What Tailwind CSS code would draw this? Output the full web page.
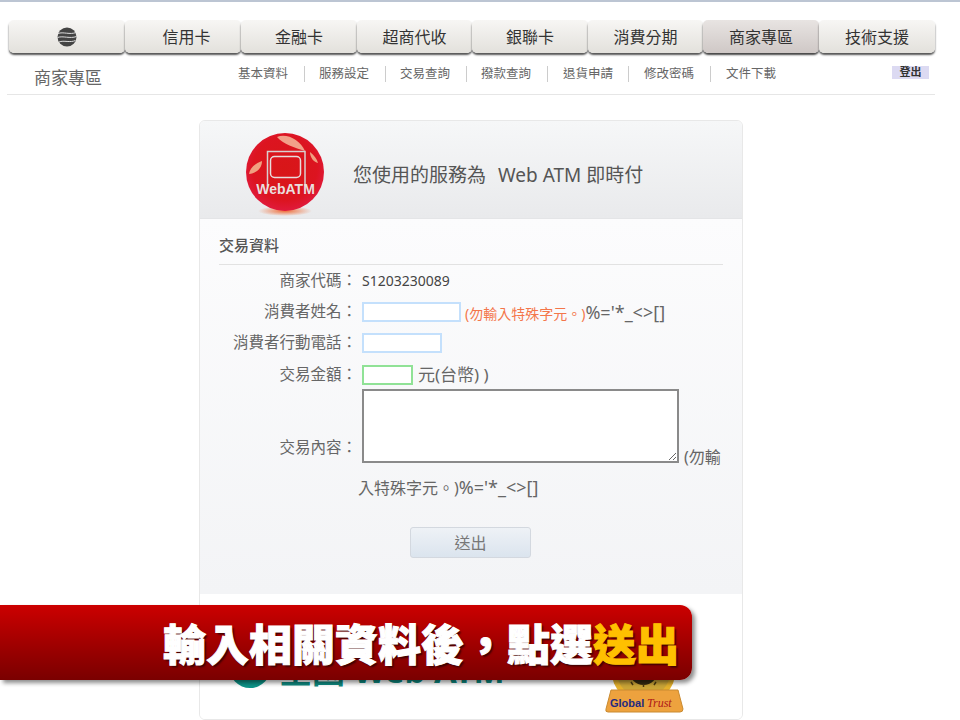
<!DOCTYPE html>
<html lang="zh-Hant">
<head>
    <meta charset="UTF-8">
    <title>商家專區</title>
    <script src="https://cdn.jsdelivr.net/npm/@tailwindcss/browser@4"></script>
</head>
<body class="relative h-[720px] w-[960px] overflow-hidden bg-white font-['Noto_Sans','Noto_Sans_CJK_TC',sans-serif] text-[#555]">
    <div class="h-[2px] bg-[#bcc5d3]"></div>

    <!-- main tabs -->
    <div class="mt-[18px] ml-[9px] flex h-[33px] w-[926px]">
        <div class="flex h-full w-[116px] items-center justify-center rounded-[5px] bg-gradient-to-b from-[#f7f6f4] to-[#e3e1dc] shadow-[0_2px_2px_#555]">
            <svg width="20" height="20" viewBox="0 0 20 20">
                <circle cx="10" cy="10" r="9.500" fill="#444"/>
                <path d="M1 6.500C6 4.500 13 8 19 5.500M0.500 10.500C6 8.500 13 12 19.500 9.500M2 15C7 13 13 16 18.500 13.500" stroke="#ddd" stroke-width="1" fill="none"/>
            </svg>
        </div>
        <div class="flex h-full w-[116px] items-center justify-center rounded-[5px] bg-gradient-to-b from-[#f7f6f4] to-[#e3e1dc] pl-[7px] text-[16px] text-[#333] shadow-[0_2px_2px_#555]">信用卡</div>
        <div class="flex h-full w-[116px] items-center justify-center rounded-[5px] bg-gradient-to-b from-[#f7f6f4] to-[#e3e1dc] text-[16px] text-[#333] shadow-[0_2px_2px_#555]">金融卡</div>
        <div class="flex h-full w-[115px] items-center justify-center rounded-[5px] bg-gradient-to-b from-[#f7f6f4] to-[#e3e1dc] text-[16px] text-[#333] shadow-[0_2px_2px_#555]">超商代收</div>
        <div class="flex h-full w-[116px] items-center justify-center rounded-[5px] bg-gradient-to-b from-[#f7f6f4] to-[#e3e1dc] text-[16px] text-[#333] shadow-[0_2px_2px_#555]">銀聯卡</div>
        <div class="flex h-full w-[115px] items-center justify-center rounded-[5px] bg-gradient-to-b from-[#f7f6f4] to-[#e3e1dc] text-[16px] text-[#333] shadow-[0_2px_2px_#555]">消費分期</div>
        <div class="flex h-full w-[116px] items-center justify-center rounded-[5px] bg-gradient-to-b from-[#e8e4e2] to-[#cfc8c6] text-[16px] text-[#333] shadow-[0_2px_2px_#444]">商家專區</div>
        <div class="flex h-full w-[116px] items-center justify-center rounded-[5px] bg-gradient-to-b from-[#f7f6f4] to-[#e3e1dc] text-[16px] text-[#333] shadow-[0_2px_2px_#555]">技術支援</div>
    </div>

    <!-- sub nav -->
    <div class="relative ml-[7px] flex h-[42px] w-[928px] border-b border-[#e6e6e6] pt-[13px]">
        <div class="ml-[27px] w-[204px] text-[17px] leading-[24px] text-[#666]">商家專區</div>
        <div class="flex h-[16px] text-[12.500px] leading-[16px] text-[#666]">
            <span class="w-[67px] border-r border-[#ccc]">基本資料</span>
            <span class="w-[81px] border-r border-[#ccc] pl-[14px]">服務設定</span>
            <span class="w-[81px] border-r border-[#ccc] pl-[14px]">交易查詢</span>
            <span class="w-[81px] border-r border-[#ccc] pl-[14px]">撥款查詢</span>
            <span class="w-[81px] border-r border-[#ccc] pl-[15px]">退貨申請</span>
            <span class="w-[82px] border-r border-[#ccc] pl-[15px]">修改密碼</span>
            <span class="pl-[15px]">文件下載</span>
        </div>
        <div class="absolute top-[13px] right-[6px] flex h-[13px] w-[37px] items-center justify-center bg-[#dcdaf2] text-[11px] font-bold text-[#333]">登出</div>
    </div>

    <!-- card -->
    <div class="mt-[25px] ml-[199px] h-[600px] w-[544px] overflow-hidden rounded-[6px] border border-[#e8e8e8]">
        <div class="flex h-[98px] items-center border-b border-[#e4e5e7] bg-gradient-to-b from-[#f6f7f8] to-[#e9eaec] pt-[11px] pl-[45px]">
            <svg class="-mt-[3px]" width="80" height="84" viewBox="0 0 80 84">
                <defs>
                    <radialGradient id="ball" cx="50%" cy="45%" r="55%">
                        <stop offset="0%" stop-color="#d81618"/>
                        <stop offset="75%" stop-color="#dc1420"/>
                        <stop offset="100%" stop-color="#e01a3c"/>
                    </radialGradient>
                    <radialGradient id="glow" cx="50%" cy="50%" r="50%">
                        <stop offset="0%" stop-color="#f0703c"/>
                        <stop offset="100%" stop-color="#f0703c" stop-opacity="0"/>
                    </radialGradient>
                </defs>
                <ellipse cx="40" cy="79" rx="27" ry="5" fill="url(#glow)"/>
                <circle cx="40" cy="40" r="39" fill="url(#ball)"/>
                <path d="M32 5C42 1 55 8 60 19C50 16 38 12 32 5Z" fill="#f2a088"/>
                <path d="M4 42C5 36 9 32 17 29C17 36 12 41 4 42Z" fill="#f0a080"/>
                <path d="M65 20C69 23 72 27 73 31C69 30 65 26 65 20Z" fill="#f0a080"/>
                <path d="M22.500 54V19.500H60V54" fill="none" stroke="#d8d0d0" stroke-width="1.500"/>
                <rect x="25.500" y="24.500" width="30" height="21" rx="4" fill="none" stroke="#e8dcdc" stroke-width="1.500"/>
                <text x="40.500" y="61.500" text-anchor="middle" font-family="Liberation Sans" font-weight="700" font-size="14" fill="#eadede">WebATM</text>
            </svg>
            <div class="ml-[28px] flex text-[19px] text-[#555]"><span>您使用的服務為</span><span class="ml-[12px]">Web ATM 即時付</span></div>
        </div>

        <div class="h-[375px] bg-gradient-to-b from-[#fcfcfd] to-[#f3f4f6] px-[19px] pt-[16px]">
            <div class="border-b border-[#e2e2e2] pb-[9px] text-[15px] leading-[20px] font-medium text-[#555]">交易資料</div>
            <div class="text-[15.500px] text-[#666]">
                <div class="flex h-[31px] items-center">
                    <div class="w-[138px] text-right">商家代碼：</div>
                    <div class="ml-[5px] text-[14px] text-[#444]">S1203230089</div>
                </div>
                <div class="flex h-[31px] items-center pt-[1px]">
                    <div class="w-[138px] text-right">消費者姓名：</div>
                    <input class="ml-[5px] h-[20px] w-[99px] border-2 border-[#c4e0fc] bg-white" type="text">
                    <div class="ml-[4px] text-[14px] whitespace-nowrap text-[#f4764a]">(勿輸入特殊字元。)<span class="text-[18px] text-[#666]">%='*_&lt;&gt;[]</span></div>
                </div>
                <div class="flex h-[31px] items-center">
                    <div class="w-[138px] text-right">消費者行動電話：</div>
                    <input class="ml-[5px] h-[20px] w-[80px] border-2 border-[#c4e0fc] bg-white" type="text">
                </div>
                <div class="flex h-[31px] items-center pt-[3px]">
                    <div class="w-[138px] text-right">交易金額：</div>
                    <input class="ml-[5px] h-[20px] w-[51px] border-2 border-[#90e296] bg-white" type="text">
                    <div class="ml-[5px] text-[17px]">元(台幣) )</div>
                </div>
                <div class="flex h-[74px]">
                    <div class="mt-[46px] w-[138px] text-right leading-[24px]">交易內容：</div>
                    <textarea class="ml-[5px] h-[74px] w-[317px] border-2 border-[#8a8a8a] bg-white"></textarea>
                    <div class="mt-[56px] ml-[5px] text-[16px] leading-[24px] whitespace-nowrap">(勿輸</div>
                </div>
                <div class="mt-[12px] whitespace-nowrap pl-[139px] text-[16px] leading-[24px]">入特殊字元。)<span class="text-[18px]">%='*_&lt;&gt;[]</span></div>
                <button class="mt-[27px] ml-[191px] h-[31px] w-[121px] rounded-[3px] border border-[#d3d8df] bg-gradient-to-b from-[#eef2f6] to-[#dbe4ee] text-[16px] text-[#777]">送出</button>
            </div>
        </div>

        <!-- footer logos -->
        <div class="flex h-[126px] bg-white pt-[52px] pl-[29px]">
            <div class="size-[42px] rounded-full bg-[#0d9488]"></div>
            <div class="mt-[5px] ml-[8px] w-[321px] text-[33px] leading-[40px] font-bold whitespace-nowrap text-[#0f8a80]">全國 Web ATM</div>
            <svg class="mt-[10px]" width="90" height="60" viewBox="0 0 90 60">
                <circle cx="43.500" cy="15" r="32" fill="#e3b02c"/>
                <circle cx="43.500" cy="15" r="27" fill="#c9a437"/>
                <circle cx="43.500" cy="15" r="14" fill="#332a10"/>
                <path d="M43.500 28V31M31 26L33 29M56 26L54 29" stroke="#4a3a10" stroke-width="1.500"/>
                <path d="M11 34H78L83 53Q83 56 80 56H8Q5 56 6 53Z" fill="#eda23e" stroke="#c98a30"/>
                <text x="10" y="51" font-family="Liberation Sans" font-weight="700" font-size="11" fill="#1f2a80">Global</text>
                <text x="47" y="51" font-family="Liberation Serif" font-style="italic" font-size="12" fill="#b01818">Trust</text>
            </svg>
        </div>
    </div>

    <!-- caption banner -->
    <div class="absolute top-[605px] left-0 flex h-[75px] w-[692px] items-center justify-end rounded-r-[12px] bg-gradient-to-b from-[#cc0000] to-[#7a0000] pt-[4px] pr-[13px] text-[43px] leading-none font-black whitespace-nowrap text-white shadow-[3px_3px_4px_rgba(0,0,0,0.45)] [-webkit-text-stroke:1px_currentColor] [text-shadow:2px_2px_2px_#3a0000]">
        輸入相關資料後，點選<span class="text-[#ffc000]">送出</span>
    </div>
</body>
</html>
